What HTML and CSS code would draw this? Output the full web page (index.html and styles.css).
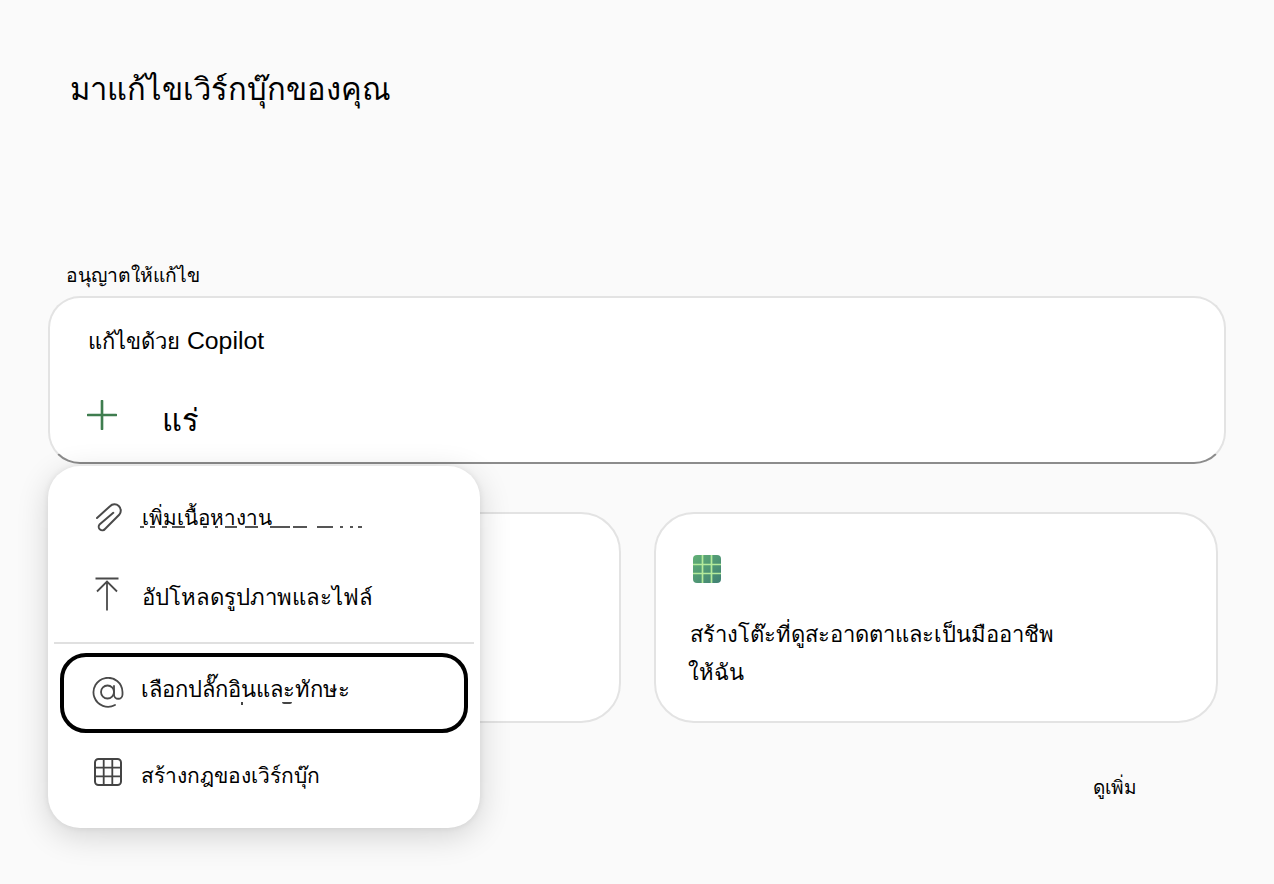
FILE: index.html
```html
<!DOCTYPE html>
<html lang="th">
<head>
<meta charset="utf-8">
<title>Copilot</title>
<link rel="stylesheet" href="styles.css">
</head>
<body>
<main class="page">
  <h1 class="title">มาแก้ไขเวิร์กบุ๊กของคุณ</h1>
  <div class="allow">อนุญาตให้แก้ไข</div>
  <section class="composer">
    <div class="composer-label"><span class="label-thai">แก้ไขด้วย</span> Copilot</div>
    <div class="composer-row">
      <svg class="plus" viewBox="0 0 32 32" width="30" height="30"><path d="M16 1v30M1 16h30" stroke="#3f7d4f" stroke-width="2.8" fill="none" stroke-linecap="round"/></svg>
      <span class="typed">แร่</span>
    </div>
  </section>
  <section class="cards">
    <div class="card card-left"></div>
    <div class="card card-right">
      <svg class="grid-icon" viewBox="0 0 28 28" width="28" height="28">
        <defs><linearGradient id="g" x1="0" y1="0" x2="1" y2="1"><stop offset="0" stop-color="#62b076"/><stop offset="1" stop-color="#3f8073"/></linearGradient></defs>
        <rect width="28" height="28" rx="4" fill="url(#g)"/>
        <path d="M9.5 0v28M18.5 0v28M0 9.5h28M0 18.5h28" stroke="#b4ea9b" stroke-width="1.7"/>
      </svg>
      <p class="card-text">สร้างโต๊ะที่ดูสะอาดตาและเป็นมืออาชีพ<br><span class="card-line2">ให้ฉัน</span></p>
    </div>
  </section>
  <div class="more-row"><span class="more">ดูเพิ่ม</span></div>

  <nav class="menu">
    <div class="item item-add">
      <svg class="ico" viewBox="0 0 26 30" width="26" height="30"><path d="M1 15 14 3.200a6.300 6.300 0 0 1 9.200 8.600L9 26a3.500 3.500 0 0 1-5.500-4.400L17.300 9.800" fill="none" stroke="#4a4a4a" stroke-width="2" stroke-linecap="round" stroke-linejoin="round"/></svg>
      <span class="label">เพิ่มเนื้อหางาน</span>
      <span class="ghost"></span>
    </div>
    <div class="item item-upload">
      <svg class="ico" viewBox="0 0 24 34" width="24" height="34"><path d="M.5 1.500h23M12 33.500V4.500M2 14.500l10-10 10 10" fill="none" stroke="#4a4a4a" stroke-width="1.800"/></svg>
      <span class="label">อัปโหลดรูปภาพและไฟล์</span>
    </div>
    <div class="divider"></div>
    <div class="item item-focus">
      <svg class="ico" viewBox="0 0 32 32" width="32" height="32"><circle cx="15.500" cy="15" r="6.500" fill="none" stroke="#4a4a4a" stroke-width="1.800"/><path d="M22 9v8.500a4 4 0 0 0 8.500 0V15A14.500 14.500 0 1 0 23 28" fill="none" stroke="#4a4a4a" stroke-width="1.800" stroke-linecap="round"/></svg>
      <span class="label">เลือกปลั๊กอินและทักษะ</span>
      <span class="frag frag-dot"></span>
      <span class="frag frag-curve"></span>
    </div>
    <div class="item item-rules">
      <svg class="ico" viewBox="0 0 28 28" width="28" height="28"><rect x="1" y="1" width="26" height="26" rx="3.500" fill="none" stroke="#444" stroke-width="2"/><path d="M9.700 1v26M18.300 1v26M1 9.700h26M1 18.300h26" stroke="#444" stroke-width="1.800"/></svg>
      <span class="label">สร้างกฎของเวิร์กบุ๊ก</span>
    </div>
  </nav>
</main>
</body>
</html>
```
FILE: styles.css
```css
* { box-sizing: border-box; }
html, body { margin: 0; height: 100%; }
body {
  background: #fafafa;
  color: #000;
  font-family: "DejaVu Serif", "Liberation Serif", serif;
  overflow: hidden;
}
.page { position: relative; width: 1274px; height: 884px; padding: 68px 48px 0 48px; }
.title { margin: 0 0 0 22px; font-size: 30.900px; line-height: 42px; font-weight: 400; }
.allow { margin: 154px 0 0 18px; font-size: 19.300px; line-height: 24px; height: 32px; }
.composer {
  width: 1178px; height: 168px;
  background: #fff; border: 2px solid #e3e3e3; border-bottom-color: #8c8c8c;
  border-radius: 32px;
  padding: 27px 0 0 38px;
}
.composer-label { font-family: "Liberation Sans", "DejaVu Serif", serif; font-size: 24.800px; line-height: 32px; }
.label-thai { font-size: 22px; }
.composer-row { display: flex; align-items: center; margin: 32px 0 0 -1px; }
.plus { display: block; }
.typed { margin: 10px 0 0 45px; font-size: 31px; line-height: 40px; }
.cards { display: flex; gap: 33px; margin-top: 48px; }
.card {
  width: 564px; height: 211px; background: #fff;
  border: 2px solid #e3e3e3; border-radius: 40px;
}
.card-left { width: 573px; }
.card-right { padding: 41px 0 0 37px; }
.grid-icon { display: block; }
.card-text { margin: 33px 0 0 -3px; font-size: 22px; line-height: 38px; white-space: nowrap; }
.card-line2 { margin-left: -2px; }
.more-row { display: flex; justify-content: flex-end; padding-right: 89px; margin-top: 50px; }
.more { font-size: 19px; line-height: 28px; }
.menu {
  position: absolute; left: 48px; top: 466px; width: 432px; height: 362px;
  background: #fff; border-radius: 32px;
  box-shadow: 0 8px 32px rgba(0,0,0,.16), 0 0 6px rgba(0,0,0,.08);
  padding: 14px 6px 0 6px;
  display: flex; flex-direction: column;
}
.item { position: relative; display: flex; align-items: center; padding-left: 42px; font-size: 21px; }
.ico { display: block; flex: none; }
.label { margin-left: 20px; white-space: nowrap; }
.item-add { height: 78px; }
.item-add .ico { margin-bottom: 2px; }
.item-add .label { margin: 0 0 4px 20px; font-size: 20.700px; }
.item-upload { height: 84px; }
.item-upload .ico { margin-bottom: 12px; margin-left: -1px; }
.item-upload .label { margin: 0 0 6px 23px; font-size: 22.200px; }
.divider { height: 2px; background: #e0e0e0; }
.item-focus {
  height: 80px; margin: 9px 6px 0 6px; padding-left: 28px;
  border: 4px solid #000; border-radius: 26px;
}
.item-focus .label { margin: 0 0 8px 17px; font-size: 22px; }
.item-rules { height: 84px; padding-left: 40px; }
.item-rules .ico { margin-bottom: 6px; }
.item-rules .label { margin-left: 19px; }
.ghost {
  position: absolute; left: 86px; top: 46px; width: 224px; height: 2px;
  background: linear-gradient(90deg,
    #555 0 4px, transparent 4px 10px, #555 10px 15px, transparent 15px 22px,
    #555 22px 27px, transparent 27px 32px, #555 32px 45px, transparent 45px 63px,
    #555 63px 67px, transparent 67px 75px, #555 75px 78px, transparent 78px 85px,
    #555 85px 97px, transparent 97px 105px, #555 105px 118px, transparent 118px 130px,
    #555 130px 150px, transparent 150px 153px, #555 153px 167px, transparent 167px 177px,
    #555 177px 193px, transparent 193px 200px, #555 200px 203px, transparent 203px 210px,
    #555 210px 213px, transparent 213px 218px, #555 218px 222px, transparent 222px);
}
.frag { position: absolute; background: #444; }
.frag-dot { left: 177px; top: 45px; width: 2px; height: 3px; }
.frag-curve { left: 218px; top: 45px; width: 10px; height: 2px; border-radius: 0 0 5px 5px; }
```
